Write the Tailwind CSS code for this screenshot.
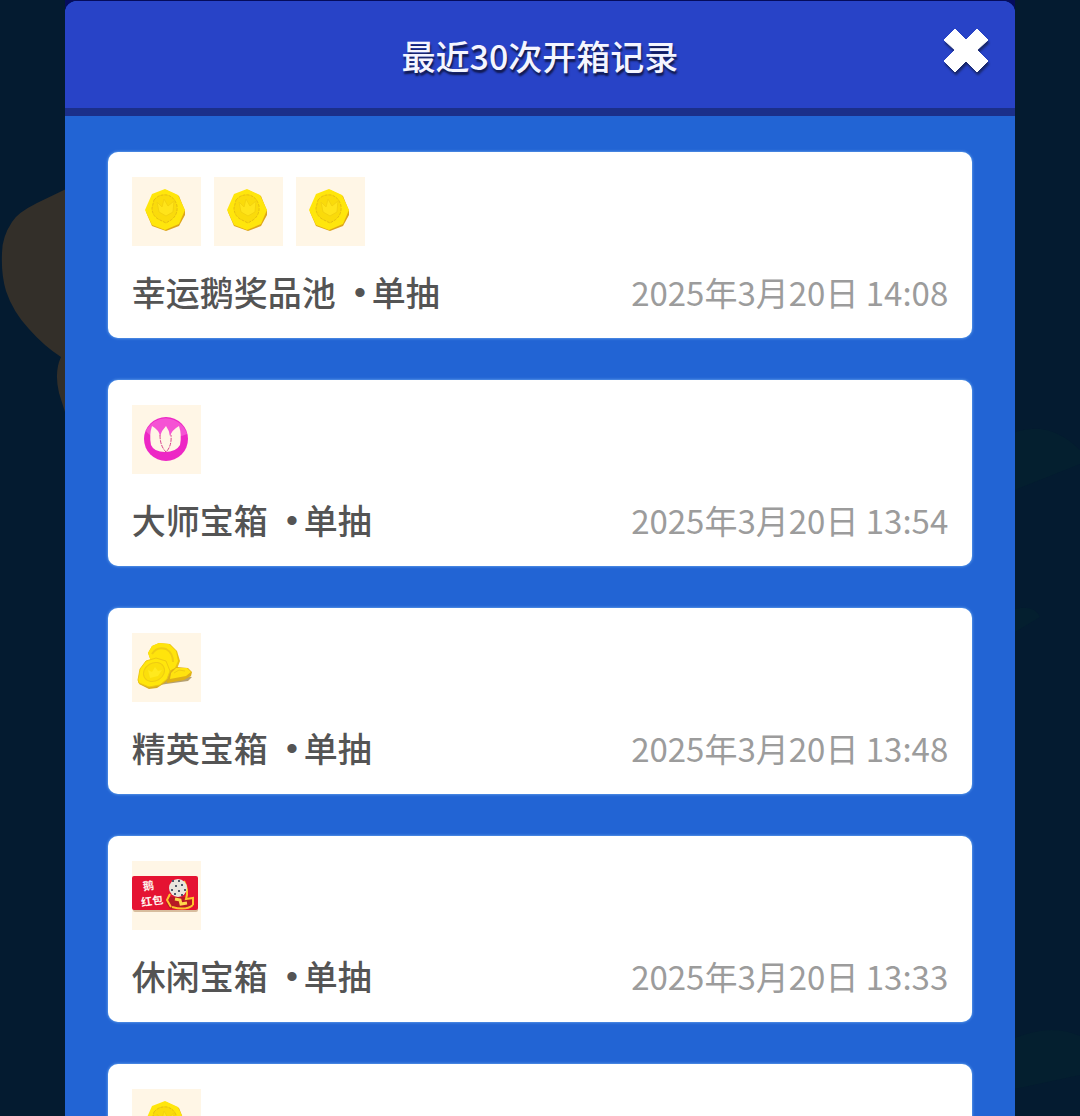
<!DOCTYPE html>
<html lang="zh-CN">
<head>
  <meta charset="UTF-8">
  <meta name="viewport" content="width=device-width, initial-scale=1.0">
  <title>最近30次开箱记录</title>
  <script src="https://cdn.jsdelivr.net/npm/@tailwindcss/browser@4"></script>
</head>
<body class="relative h-screen overflow-hidden bg-[#041b30] font-['Noto_Sans_CJK_SC',sans-serif]">

  <!-- shared icons -->
  <svg class="hidden" aria-hidden="true">
    <symbol id="coin" viewBox="0 0 69 69">
      <path d="M22 18 L34 13 L47 19 L53 34 L53 38 L47 49 L34 54 L20 49 L14 35 Z" fill="#dda51a"/>
      <path d="M20 17 L33 12 L46 18 L53 33 L47 47 L33 53 L20 48 L13 33 Z" fill="#ffe60c"/>
      <path d="M22 23 Q27 17 35 18 Q43 20 45 29 Q46 38 39 43 L34 46 L26 42 Q20 38 20 31 Z" fill="#fadb0b" stroke="#e5bd12" stroke-dasharray="3 1"/>
      <path d="M25 25 L30 30 L32 22 L36 29 L42 24 L41 35 L34 39 L27 35 Z" fill="#ffe41a" stroke="#f3d20f"/>
    </symbol>
  </svg>

  <!-- dimmed scenery behind the dialog -->
  <svg class="absolute left-0 top-[180px] w-[80px] h-[240px]" viewBox="0 0 80 240" aria-hidden="true">
    <path d="M80 3 L64 10 L37 23 Q17 33 12 42 Q2 57 2 73 Q1 94 6 111 Q13 132 29 149 Q44 166 61 177 Q54 192 59 213 L65 232 L80 235 Z" fill="#332f29"/>
  </svg>
  <svg class="absolute right-0 top-[400px] w-[80px] h-[716px]" viewBox="0 0 80 716" aria-hidden="true">
    <path d="M10 34 Q48 18 80 50 V64 L10 92 Z M10 210 Q34 203 40 217 L10 235 Z M10 640 Q50 622 80 636 V675 L10 690 Z" fill="#041f2f"/>
  </svg>
  <div class="absolute inset-x-[6%] top-0 h-4 bg-[#050c5c]"></div>

  <section class="relative mx-[6%] mt-px h-[calc(100vh-1px)] overflow-hidden rounded-t-xl bg-[#2264d4]" role="dialog" aria-labelledby="title">
    <header class="grid h-[115px] grid-cols-[1fr_auto_1fr] items-start border-b-8 border-[#1b2f8a] bg-[#2843c7]">
      <h1 id="title" class="col-start-2 pt-[31px] text-[34px] leading-[48px] font-medium text-[#f4f5ff] [text-shadow:1px_3px_2px_#11194d]">最近30次开箱记录</h1>
      <button type="button" aria-label="关闭" class="mt-6 mr-6 size-[50px] justify-self-end">
        <svg class="size-full drop-shadow-[1px_3px_1px_#18276c]" viewBox="0 0 50 50" aria-hidden="true">
          <path d="M14 4 L25 15 L36 4 L47 15 L36 25 L47 36 L36 47 L25 36 L14 47 L3 36 L14 25 L3 15 Z" fill="#fff" stroke="#fff" stroke-linejoin="round"/>
        </svg>
      </button>
    </header>

    <ul class="flex flex-col gap-[42px] px-[43px] pt-9">
      <li class="rounded-[10px] bg-white px-6 pt-[25px] pb-[21px] shadow-[0_0_3px_#82bdf5]">
        <div class="flex gap-[13px]">
          <svg class="size-[69px] bg-[#fff6e6]" aria-hidden="true"><use href="#coin"/></svg>
          <svg class="size-[69px] bg-[#fff6e6]" aria-hidden="true"><use href="#coin"/></svg>
          <svg class="size-[69px] bg-[#fff6e6]" aria-hidden="true"><use href="#coin"/></svg>
        </div>
        <div class="mt-[21px] flex justify-between leading-[50px]">
          <p class="flex text-[34px] font-medium text-[#545454]">幸运鹅奖品池<span class="w-9 pr-1.5 text-right font-['Liberation_Sans',sans-serif]">•</span>单抽</p>
          <time class="text-[33px] text-[#9c9c9c]" datetime="2025-03-20T14:08">2025年3月20日 14:08</time>
        </div>
      </li>

      <li class="rounded-[10px] bg-white px-6 pt-[25px] pb-[21px] shadow-[0_0_3px_#82bdf5]">
        <div class="flex gap-[13px]">
          <svg class="size-[69px] bg-[#fff6e6]" viewBox="0 0 69 69" aria-hidden="true">
            <circle cx="34" cy="34" r="22" fill="#ed27c5"/>
            <path d="M14 26 A22 22 0 0 1 55 29 Q43 35 33 25 Q22 37 14 26 Z" fill="#f553d4"/>
            <path d="M20 21 Q17 30 19 40 Q22 47 33 47 Q44 47 48 40 Q50 30 47 21 Q40 25 38 31 Q37 25 34 21 Q30 25 28 31 Q27 25 20 21 Z" fill="#fff6e6"/>
            <path d="M28 30 Q28 41 34 47 Q40 41 39 30" fill="none" stroke="#d9428d" stroke-dasharray="4 1"/>
          </svg>
        </div>
        <div class="mt-[21px] flex justify-between leading-[50px]">
          <p class="flex text-[34px] font-medium text-[#545454]">大师宝箱<span class="w-9 pr-1.5 text-right font-['Liberation_Sans',sans-serif]">•</span>单抽</p>
          <time class="text-[33px] text-[#9c9c9c]" datetime="2025-03-20T13:54">2025年3月20日 13:54</time>
        </div>
      </li>

      <li class="rounded-[10px] bg-white px-6 pt-[25px] pb-[21px] shadow-[0_0_3px_#82bdf5]">
        <div class="flex gap-[13px]">
          <svg class="size-[69px] bg-[#fff6e6]" viewBox="0 0 69 69" aria-hidden="true">
            <!-- back coin -->
            <path d="M16 20 L20 13 L27 10 L38 11 L45 18 L48 28 L45 36 L38 40 L20 31 Z" fill="#e8c011"/>
            <path d="M16 20 L20 13 L27 10 L37 11 L44 18 L46 28 L43 35 L37 38 L20 31 Z" fill="#ffe40c"/>
            <path d="M20 21 Q25 13 34 16 Q41 20 41 29" fill="none" stroke="#efcc12" stroke-width="2"/>
            <!-- side coin -->
            <path d="M16 54 L34 51 L56 48 L60 44 L45 42 Z" fill="#b5a072"/>
            <path d="M35 45 L40 37 L45 34 L56 35 L60 39 L59 43 L52 47 L35 50 Z" fill="#dfb016"/>
            <path d="M39 40 L44 35 L55 35 L59 39 L54 43 L38 46 Z" fill="#ffe20f"/>
            <path d="M42 40 L47 37 L53 38" fill="none" stroke="#efcc12"/>
            <!-- front coin -->
            <path d="M6 47 L7 51 L17 56 L25 55 L37 47 L39 39 Z" fill="#d9ae20"/>
            <path d="M6 47 L8 36 L14 28 L24 25 L34 28 L38 38 L35 46 L28 52 L17 54 L7 50 Z" fill="#ffe60c" stroke="#edc911"/>
            <ellipse cx="22" cy="39" rx="11" ry="9" fill="#fbdf0b" stroke="#efcc12" transform="rotate(-30 22 39)"/>
            <path d="M16 37 L20 39 L23 34 L26 38 L30 37 L26 43 L18 45 Z" fill="#ffe91e"/>
          </svg>
        </div>
        <div class="mt-[21px] flex justify-between leading-[50px]">
          <p class="flex text-[34px] font-medium text-[#545454]">精英宝箱<span class="w-9 pr-1.5 text-right font-['Liberation_Sans',sans-serif]">•</span>单抽</p>
          <time class="text-[33px] text-[#9c9c9c]" datetime="2025-03-20T13:48">2025年3月20日 13:48</time>
        </div>
      </li>

      <li class="rounded-[10px] bg-white px-6 pt-[25px] pb-[21px] shadow-[0_0_3px_#82bdf5]">
        <div class="flex gap-[13px]">
          <svg class="size-[69px] bg-[#fff6e6]" viewBox="0 0 69 69" aria-hidden="true">
            <rect x="1" y="17" width="65" height="34" rx="2" fill="#d8bd9e"/>
            <rect y="15" width="66" height="34" rx="2" fill="#e51332"/>
            <g fill="#fff1ec" font-family="Noto Sans CJK SC" font-weight="700">
              <text x="11" y="29" font-size="11" transform="rotate(-8 15 25)">鹅</text>
              <text x="9" y="44" font-size="11" transform="rotate(-8 20 39)">红包</text>
            </g>
            <path d="M37 36 L62 36 L62 45 L56 48 L38 48 L34 42 Z" fill="#b81a24"/>
            <path d="M38 33 L35 39 L39 46 M40 46 Q54 50 61 44 M52 20 Q57 29 54 38 L61 37 V44" fill="none" stroke="#ffc32d" stroke-width="2"/>
            <circle cx="46" cy="27" r="9" fill="#e9e5df"/>
            <path d="M40 20 h2 M46 20 h2 M49 24 h2 M43 25 h2 M52 29 h2 M39 29 h2 M46 30 h2 M42 33 h2 M49 34 h2" stroke="#515a6b" stroke-width="2"/>
            <path d="M43 38 L48 39 L49 43 L55 42" fill="none" stroke="#ffd84d" stroke-width="3"/>
          </svg>
        </div>
        <div class="mt-[21px] flex justify-between leading-[50px]">
          <p class="flex text-[34px] font-medium text-[#545454]">休闲宝箱<span class="w-9 pr-1.5 text-right font-['Liberation_Sans',sans-serif]">•</span>单抽</p>
          <time class="text-[33px] text-[#9c9c9c]" datetime="2025-03-20T13:33">2025年3月20日 13:33</time>
        </div>
      </li>

      <li class="min-h-[186px] rounded-[10px] bg-white px-6 pt-[25px] pb-[21px] shadow-[0_0_3px_#82bdf5]">
        <div class="flex gap-[13px]">
          <svg class="size-[69px] bg-[#fff6e6]" aria-hidden="true"><use href="#coin"/></svg>
        </div>
      </li>
    </ul>
  </section>

</body>
</html>
